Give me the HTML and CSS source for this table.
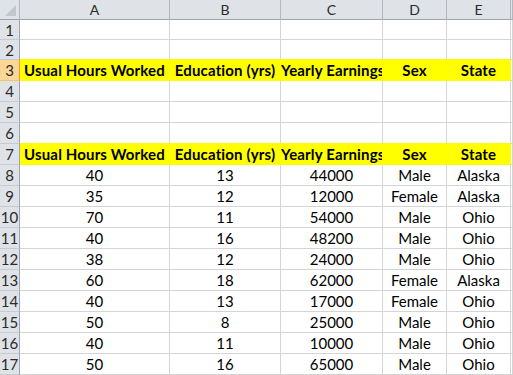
FILE: index.html
```html
<!DOCTYPE html>
<html lang="en">
  <head>
    <meta charset="UTF-8" />
    <meta name="viewport" content="width=device-width, initial-scale=1.0" />
    <title>Sheet1</title>
    <link rel="stylesheet" href="styles.css">
  </head>
  <body>
    <div class="sheet">
      <div class="row col-heads">
        <div class="corner"><span class="corner-tri"></span></div>
        <div class="col-head">A</div>
        <div class="col-head">B</div>
        <div class="col-head">C</div>
        <div class="col-head">D</div>
        <div class="col-head">E</div>
        <div class="col-head"></div>
      </div>

      <div class="row">
        <div class="row-head">1</div>
        <div class="cell"></div><div class="cell"></div><div class="cell"></div>
        <div class="cell"></div><div class="cell"></div><div class="cell"></div>
      </div>
      <div class="row">
        <div class="row-head">2</div>
        <div class="cell"></div><div class="cell"></div><div class="cell"></div>
        <div class="cell"></div><div class="cell"></div><div class="cell"></div>
      </div>
      <div class="row tall">
        <div class="row-head selected">3</div>
        <div class="cell hl">Usual Hours Worked</div>
        <div class="cell hl">Education (yrs)</div>
        <div class="cell hl">Yearly Earnings</div>
        <div class="cell hl">Sex</div>
        <div class="cell hl">State</div>
        <div class="cell"></div>
      </div>
      <div class="row tall">
        <div class="row-head">4</div>
        <div class="cell"></div><div class="cell"></div><div class="cell"></div>
        <div class="cell"></div><div class="cell"></div><div class="cell"></div>
      </div>
      <div class="row tall">
        <div class="row-head">5</div>
        <div class="cell"></div><div class="cell"></div><div class="cell"></div>
        <div class="cell"></div><div class="cell"></div><div class="cell"></div>
      </div>
      <div class="row tall">
        <div class="row-head">6</div>
        <div class="cell"></div><div class="cell"></div><div class="cell"></div>
        <div class="cell"></div><div class="cell"></div><div class="cell"></div>
      </div>
      <div class="row tall">
        <div class="row-head">7</div>
        <div class="cell hl">Usual Hours Worked</div>
        <div class="cell hl">Education (yrs)</div>
        <div class="cell hl">Yearly Earnings</div>
        <div class="cell hl">Sex</div>
        <div class="cell hl">State</div>
        <div class="cell"></div>
      </div>

      <div class="row tall">
        <div class="row-head">8</div>
        <div class="cell">40</div><div class="cell">13</div><div class="cell">44000</div>
        <div class="cell">Male</div><div class="cell">Alaska</div><div class="cell"></div>
      </div>
      <div class="row tall">
        <div class="row-head">9</div>
        <div class="cell">35</div><div class="cell">12</div><div class="cell">12000</div>
        <div class="cell">Female</div><div class="cell">Alaska</div><div class="cell"></div>
      </div>
      <div class="row tall">
        <div class="row-head">10</div>
        <div class="cell">70</div><div class="cell">11</div><div class="cell">54000</div>
        <div class="cell">Male</div><div class="cell">Ohio</div><div class="cell"></div>
      </div>
      <div class="row tall">
        <div class="row-head">11</div>
        <div class="cell">40</div><div class="cell">16</div><div class="cell">48200</div>
        <div class="cell">Male</div><div class="cell">Ohio</div><div class="cell"></div>
      </div>
      <div class="row tall">
        <div class="row-head">12</div>
        <div class="cell">38</div><div class="cell">12</div><div class="cell">24000</div>
        <div class="cell">Male</div><div class="cell">Ohio</div><div class="cell"></div>
      </div>
      <div class="row tall">
        <div class="row-head">13</div>
        <div class="cell">60</div><div class="cell">18</div><div class="cell">62000</div>
        <div class="cell">Female</div><div class="cell">Alaska</div><div class="cell"></div>
      </div>
      <div class="row tall">
        <div class="row-head">14</div>
        <div class="cell">40</div><div class="cell">13</div><div class="cell">17000</div>
        <div class="cell">Female</div><div class="cell">Ohio</div><div class="cell"></div>
      </div>
      <div class="row tall">
        <div class="row-head">15</div>
        <div class="cell">50</div><div class="cell">8</div><div class="cell">25000</div>
        <div class="cell">Male</div><div class="cell">Ohio</div><div class="cell"></div>
      </div>
      <div class="row tall">
        <div class="row-head">16</div>
        <div class="cell">40</div><div class="cell">11</div><div class="cell">10000</div>
        <div class="cell">Male</div><div class="cell">Ohio</div><div class="cell"></div>
      </div>
      <div class="row tall">
        <div class="row-head">17</div>
        <div class="cell">50</div><div class="cell">16</div><div class="cell">65000</div>
        <div class="cell">Male</div><div class="cell">Ohio</div><div class="cell"></div>
      </div>
    </div>
  </body>
</html>
```

FILE: styles.css
```css
body {
  margin: 0;
  background: #fff;
  overflow: hidden;
  font-family: Lato, "Liberation Sans", sans-serif;
  font-size: 15px;
  color: #000;
}

.sheet {
  width: 513px;
}

.row {
  display: grid;
  grid-template-columns: 20px 150px 111px 102px 64px 64px 1fr;
  height: 20px;
}

.row.tall {
  height: 21px;
}

.cell,
.col-head,
.row-head,
.corner {
  box-sizing: border-box;
  overflow: hidden;
  white-space: nowrap;
  text-align: center;
}

.cell {
  border-right: 1px solid #d4d4d4;
  border-bottom: 1px solid #d4d4d4;
  line-height: 20px;
}

.cell.hl {
  background: #ffff00;
  border-color: #ffff00;
  box-shadow: 0 -1px 0 #ffff00;
  font-weight: bold;
  letter-spacing: 0.15px;
}

.col-heads .col-head,
.corner {
  background: #dfe3e8;
  border-right: 1px solid #b4b8be;
  border-bottom: 1px solid #9ea3aa;
  color: #2b2b2b;
  font-size: 14px;
  line-height: 19px;
}

.corner {
  position: relative;
}

.corner-tri {
  position: absolute;
  right: 3px;
  bottom: 3px;
  width: 0;
  height: 0;
  border-left: 11px solid transparent;
  border-bottom: 11px solid #c2c7ce;
}

.row-head {
  background: #dfe3e8;
  border-right: 1px solid #9ea3aa;
  border-bottom: 1px solid #c6cbd1;
  color: #2b2b2b;
  line-height: 20px;
  font-size: 15px;
}

.row-head.selected {
  background: #f9d796;
  border-right-color: #f29536;
  border-bottom-color: #f2c46a;
}
```
